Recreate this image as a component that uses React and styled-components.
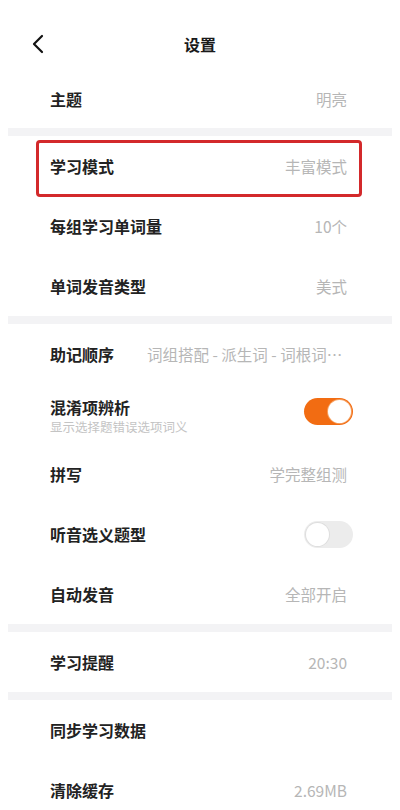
import React from 'react';
import styled, { createGlobalStyle } from 'styled-components';

const Global = createGlobalStyle`
  html, body {
    margin: 0;
    padding: 0;
    background: #ffffff;
  }
  body {
    font-family: "Noto Sans CJK SC", "Noto Sans", sans-serif;
    -webkit-font-smoothing: antialiased;
  }
`;

const Page = styled.div`
  width: 400px;
  height: 810px;
  overflow: hidden;
  background: #fff;
`;

const Header = styled.header`
  height: 70px;
  display: flex;
  align-items: flex-start;
  justify-content: center;
  position: relative;
  padding-top: 30px;
  box-sizing: border-box;
`;

const Back = styled.button`
  position: absolute;
  left: 26px;
  top: 32px;
  width: 24px;
  height: 24px;
  padding: 0;
  border: 0;
  background: none;
  display: flex;
  align-items: center;
  justify-content: center;
`;

const Title = styled.h1`
  margin: 0;
  font-size: 16px;
  line-height: 28px;
  font-weight: 700;
  color: #1a1a1a;
`;

const Section = styled.section`
  display: flex;
  flex-direction: column;
`;

const Divider = styled.div`
  height: 8px;
  margin: 0 8px;
  background: #f3f3f5;
`;

const Row = styled.div`
  position: relative;
  height: ${p => p.$h || 60}px;
  display: flex;
  align-items: center;
  justify-content: space-between;
  padding: 0 52px 0 50px;
  box-sizing: border-box;

  ${p => p.$marked && `
    &::after {
      content: '';
      position: absolute;
      left: 36px;
      right: 38px;
      top: 4px;
      bottom: -1px;
      border: 3px solid #d3292b;
      border-radius: 4px;
      pointer-events: none;
    }
  `}
`;

const LabelBox = styled.div`
  display: flex;
  flex-direction: column;
  flex-shrink: 0;
  margin-top: ${p => p.$offset || 0}px;
`;

const Label = styled.span`
  font-size: 16px;
  line-height: ${p => p.$lh || 22}px;
  font-weight: 700;
  color: #222;
`;

const Sub = styled.span`
  font-size: 12.5px;
  line-height: 17px;
  margin-top: 1px;
  color: #c4c4c4;
`;

const Value = styled.span`
  font-size: 15.5px;
  line-height: 22px;
  color: #b6b6b6;
  white-space: nowrap;
  overflow: hidden;
  text-overflow: ellipsis;
  max-width: ${p => p.$max || 200}px;
  padding-right: 1px;
`;

const Toggle = styled.span`
  position: relative;
  width: 49px;
  height: 27px;
  border-radius: 14px;
  background: ${p => (p.$on ? '#f26c12' : '#ececec')};
  margin-right: -5px;
  margin-top: ${p => p.$offset || 0}px;
  display: flex;
  align-items: center;
  justify-content: ${p => (p.$on ? 'flex-end' : 'flex-start')};
  padding: 0 2px;
  box-sizing: border-box;
`;

const Knob = styled.span`
  width: 23px;
  height: 23px;
  border-radius: 50%;
  background: #fff;
  box-shadow: 0 0 0 1px ${p => (p.$on ? '#f6a060' : '#dedede')};
`;

const Chevron = () => (
  <svg width="14" height="20" viewBox="0 0 14 20" fill="none">
    <path d="M11 2L3 10l8 8" stroke="#111" strokeWidth="2.2" strokeLinecap="round" strokeLinejoin="round" />
  </svg>
);

export default function App() {
  return (
    <Page>
      <Global />
      <Header>
        <Back aria-label="返回"><Chevron /></Back>
        <Title>设置</Title>
      </Header>

      <Section>
        <Row $h={58}>
          <Label>主题</Label>
          <Value>明亮</Value>
        </Row>
      </Section>
      <Divider />

      <Section>
        <Row $marked>
          <Label>学习模式</Label>
          <Value>丰富模式</Value>
        </Row>
        <Row>
          <Label>每组学习单词量</Label>
          <Value>10个</Value>
        </Row>
        <Row>
          <Label>单词发音类型</Label>
          <Value>美式</Value>
        </Row>
      </Section>
      <Divider />

      <Section>
        <Row>
          <Label>助记顺序</Label>
          <Value $max={200}>词组搭配 - 派生词 - 词根词缀 - 联想记忆</Value>
        </Row>
        <Row>
          <LabelBox $offset={4}>
            <Label $lh={20}>混淆项辨析</Label>
            <Sub>显示选择题错误选项词义</Sub>
          </LabelBox>
          <Toggle $on $offset={-6}><Knob $on /></Toggle>
        </Row>
        <Row>
          <Label>拼写</Label>
          <Value>学完整组测</Value>
        </Row>
        <Row>
          <Label>听音选义题型</Label>
          <Toggle><Knob /></Toggle>
        </Row>
        <Row>
          <Label>自动发音</Label>
          <Value>全部开启</Value>
        </Row>
      </Section>
      <Divider />

      <Section>
        <Row>
          <Label>学习提醒</Label>
          <Value>20:30</Value>
        </Row>
      </Section>
      <Divider />

      <Section>
        <Row>
          <Label>同步学习数据</Label>
        </Row>
        <Row>
          <Label>清除缓存</Label>
          <Value>2.69MB</Value>
        </Row>
      </Section>
    </Page>
  );
}
